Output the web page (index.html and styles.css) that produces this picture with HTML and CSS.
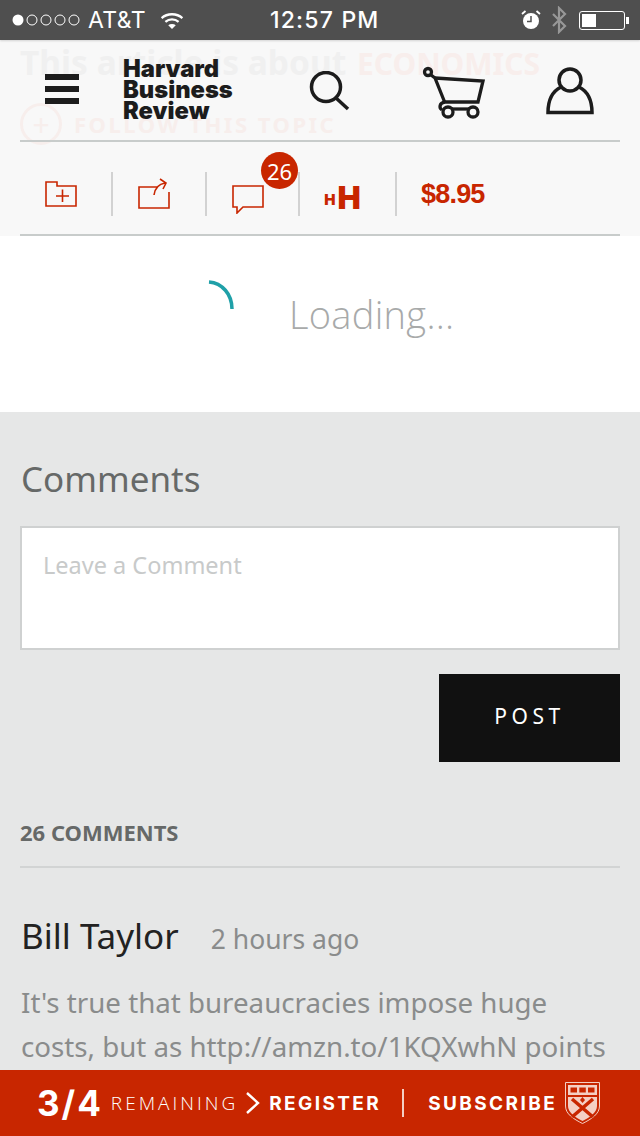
FILE: index.html
```html
<!DOCTYPE html>
<html>

<head>
    <meta charset="UTF-8">
    <title>Harvard Business Review</title>
    <link rel="stylesheet" href="styles.css">
</head>

<body>
    <div class="status-bar">
        <div class="status-left">
            <svg class="signal" width="70" height="12" viewBox="0 0 70 12">
                <circle cx="6" cy="6" r="5.500" fill="#fff" />
                <circle cx="20" cy="6" r="5" fill="none" stroke="#fff" />
                <circle cx="34" cy="6" r="5" fill="none" stroke="#fff" />
                <circle cx="48" cy="6" r="5" fill="none" stroke="#fff" />
                <circle cx="62" cy="6" r="5" fill="none" stroke="#fff" />
            </svg>
            <span class="carrier">AT&amp;T</span>
            <svg class="wifi" width="24" height="17" viewBox="0 0 25 18" fill="none" stroke="#fff" stroke-width="2.400">
                <path d="M1.500 6.500c6-5.500 16-5.500 22 0" />
                <path d="M5.500 10.500c4-3.500 10-3.500 14 0" />
                <path d="M12.500 18l-4-4c2.300-1.800 5.700-1.800 8 0z" fill="#fff" stroke="none" />
            </svg>
        </div>
        <div class="status-time">12:57 PM</div>
        <div class="status-right">
            <svg class="alarm" width="20" height="20" viewBox="0 0 20 20">
                <circle cx="10" cy="11" r="8" fill="#fff" />
                <path d="M10 6v5.500H6" fill="none" stroke="#4f4f4f" stroke-width="1.500" />
                <path d="M1 4l3.500-3M19 4l-3.500-3" stroke="#fff" stroke-width="1.800" />
            </svg>
            <svg class="bluetooth" width="16" height="28" viewBox="0 0 16 28" fill="none" stroke="#979797" stroke-width="2.200">
                <path d="M2 8l12 12-6 6V2l6 6L2 20" />
            </svg>
            <div class="battery"><div class="battery-level"></div></div>
        </div>
    </div>

    <div class="nav">
        <div class="ghost">
            <div class="ghost-title">This article is about <span class="ghost-red">ECONOMICS</span></div>
            <div class="ghost-follow">
                <span class="ghost-plus">+</span>
                <span>FOLLOW THIS TOPIC</span>
            </div>
        </div>
        <div class="nav-top">
            <div class="burger"><i></i><i></i><i></i></div>
            <div class="logo">Harvard<br>Business<br>Review</div>
            <svg class="search" width="42" height="42" viewBox="0 0 42 42" fill="none" stroke="#1c1c1c" stroke-width="3.500">
                <circle cx="17" cy="16" r="14.500" />
                <path d="M27 27l12 11" />
            </svg>
            <svg class="cart" width="64" height="54" viewBox="0 0 64 54" fill="none" stroke="#1c1c1c" stroke-width="3.300">
                <circle cx="6" cy="7" r="3.500" />
                <path d="M9 10l4 3 10 25" />
                <path d="M13 13l48 3-5 21H23c-6 1-6 6-3 8" />
                <path d="M30 44H47" />
                <circle cx="26" cy="47" r="5" />
                <circle cx="51" cy="47" r="5" />
            </svg>
            <svg class="user" width="48" height="48" viewBox="0 0 48 48" fill="none" stroke="#1c1c1c" stroke-width="3.500">
                <circle cx="24" cy="13" r="11" />
                <path d="M15 20C7 24 2 31 2 45.500H46C46 31 41 24 33 20" />
            </svg>
        </div>
        <div class="tools">
            <div class="tool tool-first">
                <svg width="34" height="28" viewBox="0 0 34 28" fill="none" stroke="#c82600" stroke-width="1.600">
                    <path d="M2 2H13V6H32V26H2zM25 16H12M18.500 9.500V22" />
                </svg>
            </div>
            <div class="tool tool-share">
                <svg width="34" height="32" viewBox="0 0 34 32" fill="none" stroke="#c82600" stroke-width="1.600">
                    <path d="M20 9H2V30H32V14M17 17C18 10 22 6 28 5M23 1l6 4-3 6" />
                </svg>
            </div>
            <div class="tool tool-comment">
                <svg class="bubble" width="34" height="30" viewBox="0 0 34 30" fill="none" stroke="#c82600" stroke-width="1.600">
                    <path d="M2 2H32V23H12L6 29V23H2z" />
                </svg>
                <span class="badge">26</span>
            </div>
            <div class="tool tool-size"><span class="small-h">H</span>H</div>
            <div class="tool tool-price">$8.95</div>
        </div>
    </div>

    <div class="loading">
        <svg class="spinner" width="30" height="32" viewBox="0 0 30 32" fill="none" stroke="#1fa0a8" stroke-width="3.500">
            <path d="M3 2C16 3 26 14 26 29" />
        </svg>
        <span class="loading-text">Loading...</span>
    </div>

    <div class="comments">
        <h2>Comments</h2>
        <div class="comment-box">Leave a Comment</div>
        <div class="post-row"><div class="post-btn">POST</div></div>
        <div class="comment-count">26 COMMENTS</div>
        <div class="comment-head">
            <span class="comment-author">Bill Taylor</span>
            <span class="comment-date">2 hours ago</span>
        </div>
        <p class="comment-text">It's true that bureaucracies impose huge<br>costs, but as http://amzn.to/1KQXwhN points</p>
    </div>

    <div class="footer">
        <span class="meter">3/4</span>
        <span class="remaining">REMAINING</span>
        <svg class="chevron" width="16" height="24" viewBox="0 0 16 24" fill="none" stroke="#fff" stroke-width="2.400">
            <path d="M2 2l11 10L2 22" />
        </svg>
        <span class="footer-link register">REGISTER</span>
        <span class="footer-divider"></span>
        <span class="footer-link">SUBSCRIBE</span>
        <svg class="shield" width="35" height="42" viewBox="0 0 35 42">
            <path d="M.5.5h34V24c0 8-8 13-17 17.500C8.500 37 .5 32 .5 24z" fill="none" stroke="#f4cfc4" />
            <path d="M3 3h29v10H3z" fill="#f4cfc4" />
            <path d="M5.500 5.500h6.500v5H5.500zM14.300 5.500h6.500v5h-6.500zM23 5.500h6.500v5H23z" fill="#c82600" />
            <path d="M3 15h29v9c0 6.500-7 11-14.500 15C10 35 3 30.500 3 24z" fill="#f4cfc4" />
            <path d="M7 17l21 18M28 17L7 35" stroke="#c82600" stroke-width="3.500" />
            <path d="M17.500 15l2.500 3-2.500 3-2.500-3z" fill="#c82600" />
        </svg>
    </div>
</body>

</html>
```

FILE: styles.css
```css
* {
    box-sizing: border-box;
}

html,
body {
    margin: 0;
    padding: 0;
}

body {
    width: 640px;
    height: 1136px;
    overflow: hidden;
    display: flex;
    flex-direction: column;
    font-family: 'Noto Sans', sans-serif;
    background: #e6e7e7;
}

.status-bar {
    flex: none;
    height: 40px;
    background: #4f4f4f;
    color: #fff;
    display: flex;
    align-items: center;
    justify-content: space-between;
    padding: 0 15px 0 12px;
    font-family: 'Inter', sans-serif;
    position: relative;
    box-shadow: 0 1px 2px rgba(0, 0, 0, 0.15);
    z-index: 1;
}

.status-left,
.status-right {
    display: flex;
    align-items: center;
}

.carrier {
    font-size: 23px;
    letter-spacing: 0.400px;
    margin-left: 6px;
}

.wifi {
    margin-left: 14px;
}

.status-time {
    font-size: 23px;
    font-weight: 500;
    letter-spacing: 1.200px;
    position: absolute;
    left: 270px;
}

.status-right {
    gap: 10px;
}

.battery {
    width: 46px;
    height: 19px;
    border: 1px solid #fff;
    border-radius: 3px;
    padding: 2px;
    margin-left: 2px;
    position: relative;
}

.battery::after {
    content: '';
    position: absolute;
    right: -5px;
    top: 5px;
    width: 3px;
    height: 7px;
    background: #fff;
}

.battery-level {
    width: 14px;
    height: 13px;
    background: #fff;
}

.nav {
    flex: none;
    height: 196px;
    padding: 0 20px;
    background: #f8f8f8;
    position: relative;
}

.ghost {
    position: absolute;
    left: 20px;
    top: 0;
    color: #f0f0f0;
    font-weight: 700;
}

.ghost-title {
    font-size: 33.500px;
    line-height: 44px;
    white-space: nowrap;
}

.ghost-red {
    color: #f8eeec;
    font-size: 30px;
    margin-left: 2px;
}

.ghost-follow {
    display: flex;
    align-items: center;
    gap: 12px;
    color: #f7eeec;
    font-size: 22px;
    letter-spacing: 2.500px;
    margin-top: 17px;
}

.ghost-plus {
    width: 42px;
    height: 42px;
    border: 3px solid #f7eeec;
    border-radius: 50%;
    display: flex;
    align-items: center;
    justify-content: center;
    font-weight: 400;
    font-size: 30px;
    letter-spacing: 0;
}

.nav-top {
    height: 102px;
    border-bottom: 2px solid #c8cccb;
    position: relative;
}

.burger {
    position: absolute;
    left: 25px;
    top: 34px;
}

.burger i {
    display: block;
    width: 34px;
    height: 6px;
    background: #1c1c1c;
    margin-bottom: 6px;
}

.logo {
    position: absolute;
    left: 103px;
    top: 18px;
    font-family: 'Inter', sans-serif;
    font-weight: 900;
    font-size: 23.700px;
    line-height: 21px;
    color: #1c1c1c;
}

.search {
    position: absolute;
    left: 289px;
    top: 31px;
}

.cart {
    position: absolute;
    left: 402px;
    top: 25px;
}

.user {
    position: absolute;
    left: 526px;
    top: 27px;
}

.tools {
    height: 94px;
    padding-top: 12px;
    border-bottom: 2px solid #c8cccb;
    display: flex;
    align-items: center;
}

.tool {
    height: 44px;
    width: 93px;
    border-right: 2px solid #d2d2d2;
    display: flex;
    align-items: center;
    justify-content: center;
    position: relative;
}

.tool-first {
    justify-content: flex-start;
    padding-left: 24px;
}

.tool-share {
    justify-content: flex-start;
    padding-left: 24px;
    width: 94px;
}

.tool-comment {
    justify-content: flex-start;
    padding-left: 24px;
    width: 93px;
}

.tool-size {
    width: 97px;
    color: #c82600;
    font-family: 'Inter', sans-serif;
    font-weight: 900;
    font-size: 31px;
    align-items: flex-end;
    line-height: 36px;
    padding-right: 10px;
}

.small-h {
    font-size: 15px;
    line-height: 32px;
    margin-right: 2px;
}

.tool-price {
    border-right: none;
    width: auto;
    margin-left: 24px;
    color: #c82600;
    font-family: 'Liberation Sans', sans-serif;
    font-weight: 700;
    font-size: 27px;
    letter-spacing: -0.800px;
}

.bubble {
    margin-top: 10px;
}

.badge {
    position: absolute;
    left: 54px;
    top: -20px;
    width: 37px;
    height: 37px;
    border-radius: 50%;
    background: #c82600;
    color: #fff;
    font-size: 22px;
    display: flex;
    align-items: center;
    justify-content: center;
}

.loading {
    flex: none;
    height: 176px;
    background: #fff;
    position: relative;
    display: flex;
    justify-content: flex-start;
    padding: 58px 0 0 289px;
}

.spinner {
    position: absolute;
    left: 206px;
    top: 44px;
}

.loading-text {
    font-family: 'Open Sans', sans-serif;
    font-weight: 300;
    font-size: 38px;
    letter-spacing: 0.300px;
    line-height: 40px;
    color: #a8aaaa;
}

.comments {
    flex: 1;
    min-height: 0;
    overflow: hidden;
    padding: 0 20px;
}

.comments h2 {
    margin: 43px 0 0 1px;
    font-size: 35px;
    line-height: 48px;
    font-weight: 400;
    color: #666968;
}

.comment-box {
    height: 124px;
    margin-top: 23px;
    border: 2px solid #cfd1d1;
    background: #fff;
    padding: 20px 21px;
    font-size: 23.500px;
    line-height: 34px;
    color: #c8caca;
}

.post-row {
    display: flex;
    justify-content: flex-end;
    margin-top: 24px;
}

.post-btn {
    width: 181px;
    height: 88px;
    padding-bottom: 5px;
    background: #111;
    color: #fff;
    display: flex;
    align-items: center;
    justify-content: center;
    font-size: 21px;
    letter-spacing: 4.500px;
}

.comment-count {
    margin-top: 55px;
    padding-bottom: 19px;
    border-bottom: 2px solid #d2d4d4;
    font-size: 22px;
    line-height: 30px;
    font-weight: 700;
    color: #666968;
}

.comment-head {
    display: flex;
    align-items: baseline;
    gap: 32px;
    margin: 44px 0 0 1px;
}

.comment-author {
    font-size: 35px;
    line-height: 48px;
    color: #222;
}

.comment-date {
    font-size: 26.500px;
    color: #8a8c8c;
}

.comment-text {
    margin: 20px -15px 0 1px;
    font-size: 27.700px;
    line-height: 44px;
    white-space: nowrap;
    color: #8a8c8c;
}

.footer {
    flex: none;
    height: 66px;
    background: #c82600;
    color: #fff;
    display: flex;
    align-items: center;
    padding-left: 37px;
}

.meter {
    font-family: 'Inter', sans-serif;
    font-weight: 700;
    font-size: 35px;
    letter-spacing: 2px;
}

.remaining {
    font-family: 'Open Sans', sans-serif;
    font-weight: 300;
    font-size: 19px;
    letter-spacing: 3px;
    margin-left: 8px;
}

.chevron {
    margin-left: 7px;
}

.footer-link {
    font-family: 'Inter', sans-serif;
    font-weight: 700;
    font-size: 19px;
    letter-spacing: 2.400px;
}

.register {
    margin-left: 8px;
}

.footer-divider {
    width: 2px;
    height: 28px;
    background: #f4cfc4;
    margin: 0 24px 0 21px;
}

.shield {
    margin-left: 8px;
}
```
